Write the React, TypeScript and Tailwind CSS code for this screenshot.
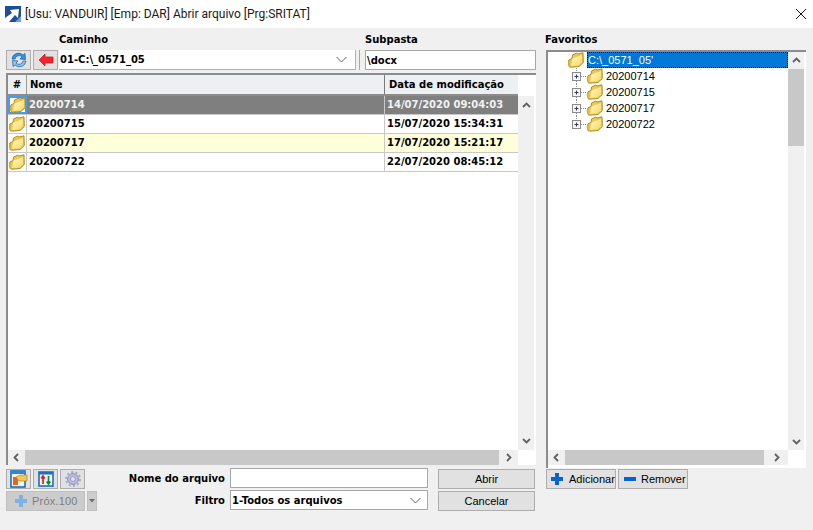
import React from "react";

const dv = "[font-family:'DejaVu_Sans',sans-serif]";
const lib = "[font-family:'Liberation_Sans',sans-serif]";

function Folder({ id }: { id: string }) {
  return (
    <svg width="16" height="16" viewBox="0 0 16 16" className="shrink-0">
      <defs>
        <linearGradient id={id} x1="0" y1="0" x2="1" y2="1">
          <stop offset="0" stopColor="#fffbd0" />
          <stop offset="1" stopColor="#f8d85e" />
        </linearGradient>
      </defs>
      <path d="M0.8 8 L4 6.5 L4.5 3 L8.5 1.2 L10 2 L15 0.8 L15.3 10.5 L11 14.5 L2.5 15.2 Q0.8 15 0.8 13.5 Z" fill="#efc84a" stroke="#b08a24" strokeWidth="1" strokeLinejoin="round" />
      <path d="M3 14 L4.5 6.5 L14 3 L14 10 L10.5 13.5 Z" fill={`url(#${id})`} />
    </svg>
  );
}

function Chevron({ dir, color = "#606060", size = 9 }: { dir: "up" | "down" | "left" | "right"; color?: string; size?: number }) {
  const d = {
    up: "M1 6 L4.5 2.5 L8 6",
    down: "M1 3 L4.5 6.5 L8 3",
    left: "M6 1 L2.5 4.5 L6 8",
    right: "M3 1 L6.5 4.5 L3 8",
  }[dir];
  return (
    <svg width={size} height={size} viewBox="0 0 9 9">
      <path d={d} fill="none" stroke={color} strokeWidth="1.8" />
    </svg>
  );
}

function ThinChevron() {
  return (
    <svg width="11" height="7" viewBox="0 0 11 7">
      <path d="M0.5 1 L5.5 6 L10.5 1" fill="none" stroke="#606060" strokeWidth="1" />
    </svg>
  );
}

function ToolButton({ children, w = "w-[25px]" }: { children: React.ReactNode; w?: string }) {
  return (
    <div className={`${w} h-5 bg-[#e1e1e1] border border-[#adadad] flex items-center justify-center shrink-0`}>{children}</div>
  );
}

function Row({ name, date, bg, text = "text-black", focus, id }: { name: string; date: string; bg: string; text?: string; focus?: boolean; id: string }) {
  return (
    <div className={`flex h-[19px] border-b border-[#c8c8c8] ${bg}`}>
      <div className={`w-[19px] flex items-center justify-center bg-white shrink-0 ${focus ? "border-2 border-[#4a9ae8]" : "border-r border-[#c8c8c8]"}`}>
        <Folder id={id} />
      </div>
      <div className={`flex-1 leading-[18px] ${text} ${dv} font-bold text-[10px] pl-[2px]`}>{name}</div>
      <div className={`w-[134px] border-l border-[#c8c8c8] pl-[2px] leading-[18px] ${text} ${dv} font-bold text-[10px] shrink-0`}>{date}</div>
    </div>
  );
}

function HScroll({ thumb }: { thumb: string }) {
  return (
    <div className="flex h-[15px] bg-[#f0f0f0] items-center">
      <div className="w-[17px] flex items-center justify-center shrink-0"><Chevron dir="left" /></div>
      <div className={`${thumb} h-[15px] bg-[#c8c8c8] shrink-0`} />
      <div className="flex-1 flex items-center justify-center"><Chevron dir="right" /></div>
    </div>
  );
}

function TreeRow({ name, last, id }: { name: string; last?: boolean; id: string }) {
  return (
    <div className="flex h-4 items-center pl-[20px]">
      <svg width="19" height="16" viewBox="0 0 19 16" className="shrink-0">
        <path d={last ? "M8.5 0 V4" : "M8.5 0 V4 M8.5 13 V16"} stroke="#909090" strokeWidth="1" strokeDasharray="1 1" />
        <path d="M13 8.5 H19" stroke="#909090" strokeWidth="1" strokeDasharray="1 1" />
        <rect x="4.5" y="4.5" width="8" height="8" fill="#f4f4f4" stroke="#8a8a8a" />
        <path d="M6.5 8.5 H10.5 M8.5 6.5 V10.5" stroke="#2c3e70" strokeWidth="1" />
      </svg>
      <Folder id={id} />
      <span className={`ml-[3px] text-[11px] text-black ${lib}`}>{name}</span>
    </div>
  );
}

export default function App() {
  return (
    <div className="w-[813px] h-[530px] bg-[#f0f0f0] flex flex-col overflow-hidden">
      <div className="h-7 bg-white flex items-center shrink-0">
        <svg width="16" height="16" viewBox="0 0 16 16" className="ml-[5px] shrink-0">
          <rect x="0" y="0" width="16" height="16" fill="#1d4f96" />
          <path d="M0 16 L0 12 L7 7 L5 4 L14 3 L13 12 L10 9 L4 16 Z" fill="#ffffff" />
          <path d="M10 16 L16 10 V16 Z" fill="#6fa3dc" />
        </svg>
        <span className="ml-[4px] text-[12px] text-[#1a1a1a] [font-family:'Roboto',sans-serif]">[Usu: VANDUIR] [Emp: DAR] Abrir arquivo [Prg:SRITAT]</span>
        <svg width="12" height="12" viewBox="0 0 12 12" className="ml-auto mr-[6px] shrink-0">
          <path d="M1 1 L11 11 M11 1 L1 11" stroke="#111" strokeWidth="1" />
        </svg>
      </div>

      <div className="flex pl-[6px]">
        <div className="w-[530px] shrink-0 flex flex-col">
          <div className={`h-[22px] flex items-center font-bold text-[10px] text-black ${dv}`}>
            <span className="ml-[53px] w-[306px]">Caminho</span>
            <span>Subpasta</span>
          </div>
          <div className="flex h-5 items-stretch">
            <ToolButton>
              <svg width="18" height="18" viewBox="0 0 18 18">
                <path d="M2 8 A6.5 6.5 0 0 1 13 4 L15 2.5 L15.5 8.5 L10 8 L12 6 A4 4 0 0 0 5 8 Z" fill="#3b8fdc" stroke="#1b5fa8" strokeWidth="0.7" />
                <path d="M16 10 A6.5 6.5 0 0 1 5 14 L3 15.5 L2.5 9.5 L8 10 L6 12 A4 4 0 0 0 13 10 Z" fill="#8cc3ef" stroke="#1b5fa8" strokeWidth="0.7" />
              </svg>
            </ToolButton>
            <div className="ml-[2px]">
              <ToolButton>
                <svg width="16" height="14" viewBox="0 0 16 14">
                  <path d="M1 7 L7 1 V4 H15 V10 H7 V13 Z" fill="#f4252f" stroke="#b81820" strokeWidth="0.7" />
                </svg>
              </ToolButton>
            </div>
            <div className={`ml-[1px] w-[297px] bg-white border-b border-[#b0b0b0] border-r flex items-center pr-[8px] font-bold text-[10px] text-black ${dv}`}>
              <span className="pl-[1px]">01-C:\_0571_05</span>
              <span className="ml-auto"><ThinChevron /></span>
            </div>
            <div className="ml-[3px] w-[1px] bg-[#a8a8a8]" />
            <div className={`ml-[5px] w-[171px] bg-white border border-[#a8a8a8] flex items-center font-bold text-[10px] text-black ${dv}`}>
              <span className="pl-[1px]">\docx</span>
            </div>
          </div>

          <div className="mt-[3px] h-[392px] flex flex-col border-t-2 border-l-2 border-[#8c8c8c] bg-white">
            <div className="flex flex-1 min-h-0">
              <div className="w-[510px] flex flex-col shrink-0">
                <div className={`flex h-[21px] bg-[#edf0f2] border-b-2 border-[#8c8c8c] font-bold text-[10px] text-black ${dv}`}>
                  <div className="w-[19px] border-r border-[#9a9a9a] text-center leading-[19px] shrink-0">#</div>
                  <div className="flex-1 pl-[3px] leading-[19px]">Nome</div>
                  <div className="w-[134px] border-l border-[#7a7a7a] pl-[4px] leading-[19px] shrink-0">Data de modificação</div>
                </div>
                <Row id="f1" focus name="20200714" date="14/07/2020 09:04:03" bg="bg-[#7f7f7f]" text="text-[#f2f2f2]" />
                <Row id="f2" name="20200715" date="15/07/2020 15:34:31" bg="bg-white" />
                <Row id="f3" name="20200717" date="17/07/2020 15:21:17" bg="bg-[#ffffd9]" />
                <Row id="f4" name="20200722" date="22/07/2020 08:45:12" bg="bg-white" />
              </div>
              <div className="w-[16px] mt-[21px] bg-[#f0f0f0] flex flex-col items-center justify-between py-[5px] shrink-0">
                <Chevron dir="up" />
                <Chevron dir="down" />
              </div>
            </div>
            <div className="w-[510px]">
              <HScroll thumb="w-[474px]" />
            </div>
          </div>

          <div className="flex mt-1">
            <div className="w-[92px] flex flex-col gap-[2px] shrink-0">
              <div className="flex gap-[2px]">
                <ToolButton>
                  <svg width="18" height="18" viewBox="0 0 18 18">
                    <rect x="1" y="1" width="14" height="16" fill="#f6f2e6" stroke="#1a6fc0" strokeWidth="1.6" />
                    <rect x="1" y="1" width="14" height="3" fill="#2b88d8" />
                    <path d="M3 7 H8 V15 H3 Z" fill="#e4662c" />
                    <path d="M6 7 L10 5 H17 V11 H9 Z" fill="#f1c75b" stroke="#a77d1a" strokeWidth="0.6" />
                  </svg>
                </ToolButton>
                <ToolButton>
                  <svg width="16" height="16" viewBox="0 0 16 16">
                    <rect x="1" y="1" width="14" height="14" fill="#f4f6f8" stroke="#1a6fc0" strokeWidth="1.6" />
                    <rect x="1" y="1" width="14" height="2.5" fill="#1a6fc0" />
                    <path d="M5 13 V6 M3.2 7.5 L5 5 L6.8 7.5" fill="none" stroke="#e01b1b" strokeWidth="1.7" />
                    <path d="M10.5 5 V12 M8.7 10.5 L10.5 13 L12.3 10.5" fill="none" stroke="#128a35" strokeWidth="1.7" />
                  </svg>
                </ToolButton>
                <ToolButton>
                  <svg width="16" height="16" viewBox="0 0 16 16">
                    <circle cx="8" cy="8" r="5.4" fill="#bcbce0" stroke="#8c8cb0" strokeWidth="1" />
                    <circle cx="8" cy="8" r="7" fill="none" stroke="#a6a6cc" strokeWidth="1.8" strokeDasharray="2.2 2.2" />
                    <circle cx="8" cy="8" r="2.4" fill="#e6e6f2" stroke="#8c8cb0" strokeWidth="0.8" />
                  </svg>
                </ToolButton>
              </div>
              <div className="flex gap-[2px]">
                <div className={`w-[79px] h-5 bg-[#cccccc] border border-[#c0c0c0] flex items-center pl-[7px] ${lib} text-[11px] text-[#7e7e7e] tracking-[0.2px] shrink-0`}>
                  <svg width="14" height="14" viewBox="0 0 14 14" className="mr-[4px] shrink-0">
                    <path d="M5 1 H9 V5 H13 V9 H9 V13 H5 V9 H1 V5 H5 Z" fill="#7fb2e4" />
                  </svg>
                  Próx.100
                </div>
                <div className="w-[10px] h-5 bg-[#cccccc] border border-[#c0c0c0] flex items-center justify-center">
                  <svg width="6" height="4" viewBox="0 0 6 4"><path d="M0 0 H6 L3 3.5 Z" fill="#6e6e6e" /></svg>
                </div>
              </div>
            </div>

            <div className="w-[127px] flex flex-col items-end shrink-0">
              <div className={`h-5 leading-[19px] font-bold text-[10px] text-black ${dv}`}>Nome do arquivo</div>
              <div className={`mt-[2px] h-5 leading-[19px] font-bold text-[10px] text-black ${dv}`}>Filtro</div>
            </div>

            <div className="ml-[5px] w-[198px] flex flex-col gap-[2px] -mt-[1px] shrink-0">
              <div className="h-5 bg-white border border-[#a8a8a8]" />
              <div className={`h-[20px] bg-white border border-[#a8a8a8] flex items-center pr-[6px] pl-[1px] font-bold text-[10px] text-black ${dv}`}>
                <span>1-Todos os arquivos</span>
                <span className="ml-auto"><ThinChevron /></span>
              </div>
            </div>

            <div className={`ml-[10px] w-[97px] flex flex-col gap-[2px] shrink-0 ${lib} text-[11px] text-black`}>
              <div className="h-5 bg-[#e1e1e1] border border-[#adadad] flex items-center justify-center">Abrir</div>
              <div className="h-5 bg-[#e1e1e1] border border-[#adadad] flex items-center justify-center">Cancelar</div>
            </div>
          </div>
        </div>

        <div className="ml-[10px] w-[260px] shrink-0 flex flex-col">
          <div className={`h-[22px] flex items-center font-bold text-[10px] text-black ${dv}`}>
            <span className="-ml-[1px]">Favoritos</span>
          </div>
          <div className="h-[418px] flex flex-col border-t-2 border-l-2 border-[#8c8c8c] bg-white">
            <div className="flex flex-1 min-h-0">
              <div className="w-[240px] flex flex-col shrink-0">
                <div className="flex h-4 items-center pl-[20px]">
                  <Folder id="t0" />
                  <span className={`ml-[3px] flex-1 h-4 bg-[#0078d7] border border-dotted border-black text-white text-[11px] leading-[14px] ${lib}`}>C:\_0571_05'</span>
                </div>
                <TreeRow id="t1" name="20200714" />
                <TreeRow id="t2" name="20200715" />
                <TreeRow id="t3" name="20200717" />
                <TreeRow id="t4" last name="20200722" />
              </div>
              <div className="w-[16px] bg-[#f0f0f0] flex flex-col items-center shrink-0">
                <div className="h-[17px] flex items-center justify-center shrink-0"><Chevron dir="up" /></div>
                <div className="w-[16px] h-[77px] bg-[#c8c8c8] shrink-0" />
                <div className="mt-auto h-[17px] flex items-center justify-center shrink-0"><Chevron dir="down" /></div>
              </div>
            </div>
            <div className="w-[240px] mb-[3px]">
              <HScroll thumb="w-[199px]" />
            </div>
          </div>
          <div className={`flex gap-[2px] mt-[1px] ${lib} text-[11px] text-black`}>
            <div className="w-[70px] h-5 bg-[#e1e1e1] border border-[#adadad] flex items-center pl-[3px]">
              <svg width="14" height="14" viewBox="0 0 14 14" className="mr-[5px] shrink-0">
                <path d="M5 1 H9 V5 H13 V9 H9 V13 H5 V9 H1 V5 H5 Z" fill="#0a62d0" />
              </svg>
              Adicionar
            </div>
            <div className="w-[70px] h-5 bg-[#e1e1e1] border border-[#adadad] flex items-center pl-[4px]">
              <svg width="14" height="14" viewBox="0 0 14 14" className="mr-[4px] shrink-0">
                <rect x="1" y="5" width="12" height="4" fill="#0a62d0" />
              </svg>
              Remover
            </div>
          </div>
        </div>
      </div>
    </div>
  );
}
